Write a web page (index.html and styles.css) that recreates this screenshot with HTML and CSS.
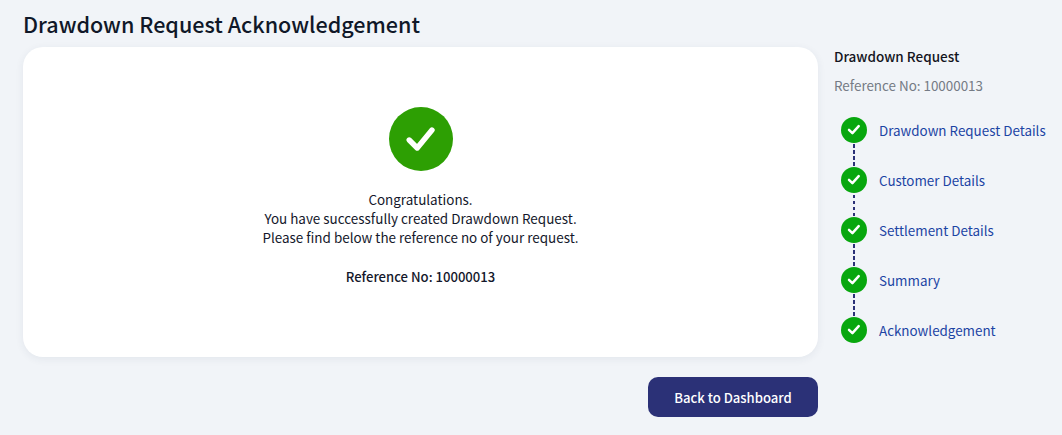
FILE: index.html
```html
<!DOCTYPE html>
<html lang="en">
<head>
<meta charset="utf-8">
<title>Drawdown Request Acknowledgement</title>
<link rel="stylesheet" href="styles.css">
</head>
<body>
<div class="page">
  <main class="main">
    <h1 class="title">Drawdown Request Acknowledgement</h1>
    <section class="card">
      <div class="big-check">
        <svg viewBox="0 0 64 64" width="64" height="64"><path d="M20.2 33l8 8 14.8-18" fill="none" stroke="#fff" stroke-width="5.4" stroke-linecap="round" stroke-linejoin="round"/></svg>
      </div>
      <p class="message">Congratulations.<br>You have successfully created Drawdown Request.<br>Please find below the reference no of your request.</p>
      <p class="reference">Reference No: 10000013</p>
    </section>
    <div class="actions"><button class="back">Back to Dashboard</button></div>
  </main>
  <aside class="side">
    <h2 class="side-title">Drawdown Request</h2>
    <p class="side-ref">Reference No: 10000013</p>
    <ol class="steps">
      <li class="step"><span class="dot"><svg viewBox="0 0 26 26" width="26" height="26"><path d="M8 12.8l3.4 3.3 6.3-7" fill="none" stroke="#fff" stroke-width="2.5" stroke-linecap="round" stroke-linejoin="round"/></svg></span><a class="step-link">Drawdown Request Details</a></li>
      <li class="step"><span class="dot"><svg viewBox="0 0 26 26" width="26" height="26"><path d="M8 12.8l3.4 3.3 6.3-7" fill="none" stroke="#fff" stroke-width="2.5" stroke-linecap="round" stroke-linejoin="round"/></svg></span><a class="step-link">Customer Details</a></li>
      <li class="step"><span class="dot"><svg viewBox="0 0 26 26" width="26" height="26"><path d="M8 12.8l3.4 3.3 6.3-7" fill="none" stroke="#fff" stroke-width="2.5" stroke-linecap="round" stroke-linejoin="round"/></svg></span><a class="step-link">Settlement Details</a></li>
      <li class="step"><span class="dot"><svg viewBox="0 0 26 26" width="26" height="26"><path d="M8 12.8l3.4 3.3 6.3-7" fill="none" stroke="#fff" stroke-width="2.5" stroke-linecap="round" stroke-linejoin="round"/></svg></span><a class="step-link">Summary</a></li>
      <li class="step"><span class="dot"><svg viewBox="0 0 26 26" width="26" height="26"><path d="M8 12.8l3.4 3.3 6.3-7" fill="none" stroke="#fff" stroke-width="2.5" stroke-linecap="round" stroke-linejoin="round"/></svg></span><a class="step-link">Acknowledgement</a></li>
    </ol>
  </aside>
</div>
</body>
</html>
```
FILE: styles.css
```css
* { box-sizing: border-box; }
html, body { margin: 0; padding: 0; }
body {
  width: 1062px;
  height: 435px;
  overflow: hidden;
  background: #f1f4f8;
  font-family: "Noto Sans CJK SC", "Noto Sans", sans-serif;
  color: #1a1a1a;
}
.page { display: flex; align-items: flex-start; padding-left: 23px; }
.main { width: 795px; flex: none; }
.title {
  margin: 0;
  padding-top: 9px;
  height: 47px;
  font-size: 21.55px;
  line-height: 30px;
  font-weight: 500;
  color: #101828;
}
.card {
  height: 310px;
  background: #fff;
  border-radius: 20px;
  box-shadow: 0 2px 8px rgba(40, 50, 80, 0.07);
  padding-top: 60px;
  display: flex;
  flex-direction: column;
  align-items: center;
  text-align: center;
}
.big-check { width: 64px; height: 64px; border-radius: 50%; background: #2d9f03; }
.big-check svg { display: block; }
.message { margin: 19px 0 0; font-size: 13.45px; line-height: 19px; color: #14182b; }
.reference { margin: 20px 0 0; font-size: 13.1px; line-height: 19px; font-weight: 500; color: #14182b; }
.actions { display: flex; justify-content: flex-end; margin-top: 20px; }
.back {
  width: 170px;
  height: 40px;
  border: 0;
  border-radius: 10px;
  padding: 1px 0 0;
  background: #2b3177;
  color: #fff;
  font: 500 13.1px/20px "Noto Sans CJK SC", "Noto Sans", sans-serif;
}
.side { margin-left: 16px; flex: 1; padding-top: 46px; }
.side-title { margin: 0; font-size: 13.5px; line-height: 20px; font-weight: 500; color: #14141e; }
.side-ref { margin: 9px 0 0; font-size: 13.4px; line-height: 20px; color: #757b85; }
.steps { list-style: none; margin: 22px 0 0; padding: 0 0 0 7px; }
.step { position: relative; display: flex; align-items: center; height: 26px; margin-bottom: 24px; }
.step + .step::before {
  content: "";
  position: absolute;
  left: 12px;
  top: -24px;
  width: 2px;
  height: 24px;
  background: repeating-linear-gradient(to bottom, transparent 0 1.5px, #2b3177 1.5px 5px, transparent 5px 6px);
}
.dot { width: 26px; height: 26px; border-radius: 50%; background: #08a70e; flex: none; }
.dot svg { display: block; }
.step-link { margin-left: 12px; font-size: 13.4px; line-height: 20px; color: #1c44a4; white-space: nowrap; }
```
